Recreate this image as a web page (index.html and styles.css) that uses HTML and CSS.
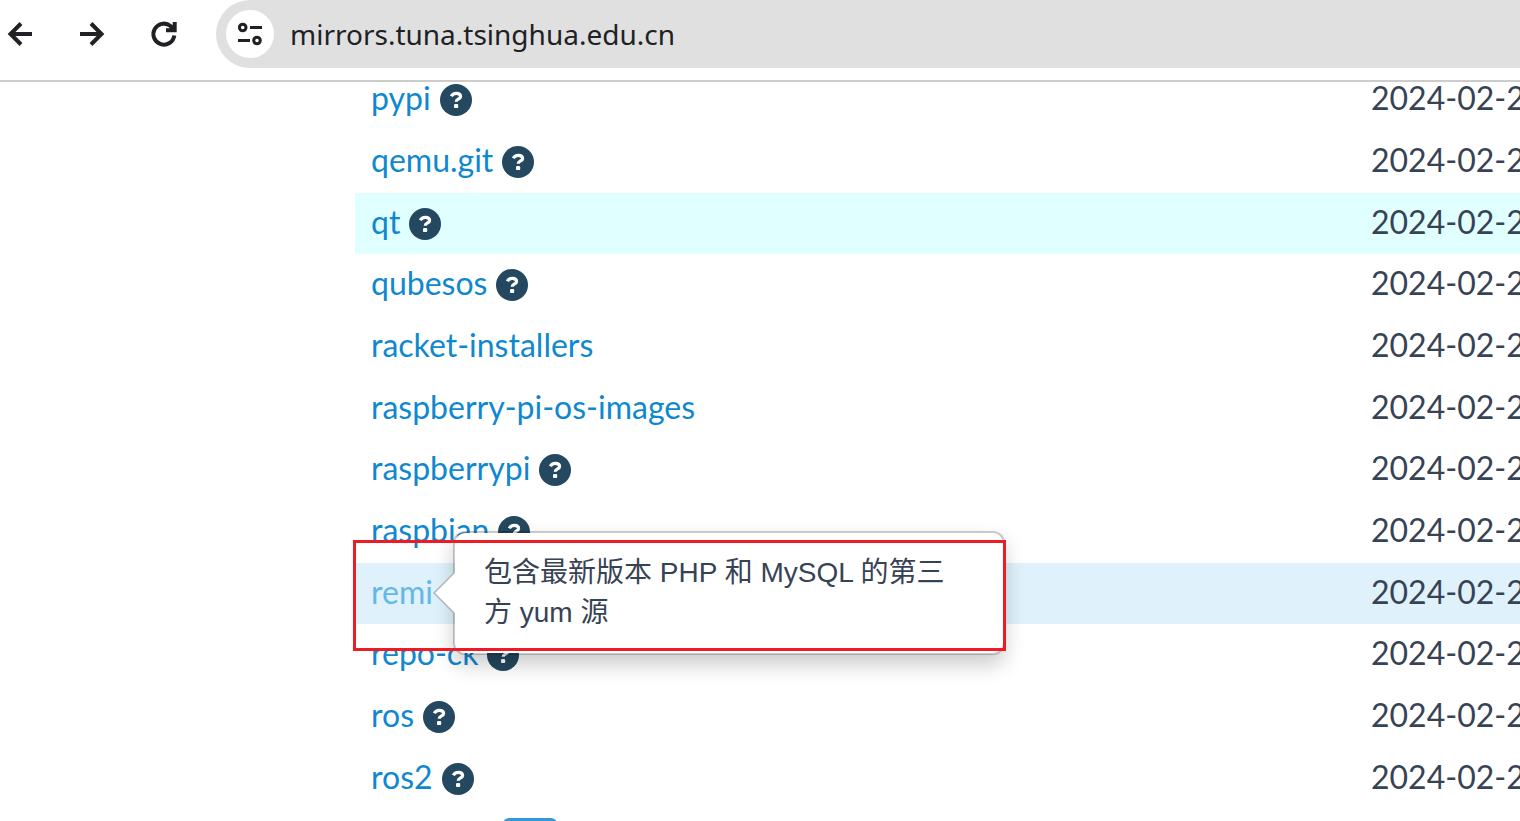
FILE: index.html
```
<!DOCTYPE html>
<html lang="zh-CN">
<head>
<meta charset="utf-8">
<title>mirrors.tuna.tsinghua.edu.cn</title>
<link rel="stylesheet" href="styles.css">
</head>
<body>
<svg class="sprite" aria-hidden="true">
  <symbol id="help" viewBox="0 0 32 32">
    <circle cx="16" cy="16" r="16" fill="currentColor"/>
    <path d="M11.300 12.300C12.400 10.100 14.200 9.300 16.300 9.300C18.900 9.300 20.600 10.600 20.600 12.400C20.600 15 16.200 14.800 16.200 17.800" fill="none" stroke="#fff" stroke-width="3.200"/>
    <rect x="14" y="19.900" width="4.200" height="4.200" rx="1.200" fill="#fff"/>
  </symbol>
</svg>
<header class="toolbar">
  <nav class="nav">
    <button class="nav-btn" type="button" aria-label="Back"><svg viewBox="0 0 28 28"><path d="M26 14H4.500M15 3.500L4.500 14L15 24.500"/></svg></button>
    <button class="nav-btn" type="button" aria-label="Forward"><svg viewBox="0 0 28 28"><path d="M2 14H23.500M13 3.500L23.500 14L13 24.500"/></svg></button>
    <button class="nav-btn" type="button" aria-label="Reload"><svg viewBox="0 0 28 28"><path d="M24.300 15.500A10.500 10.500 0 1 1 20.500 6L24 9.500M24.700 2V10.200H16"/><path class="solid" d="M18 10.500L25 4V10.500Z"/></svg></button>
  </nav>
  <div class="address">
    <button class="site-info" type="button" aria-label="Site information"><svg viewBox="0 0 28 28"><circle cx="6.700" cy="7.500" r="3.300"/><path d="M14 7.500H26M2 20.500H14"/><circle cx="21" cy="20.500" r="3.300"/></svg></button>
    <span class="url">mirrors.tuna.tsinghua.edu.cn</span>
  </div>
</header>
<main class="page">
  <table class="mirrors">
    <colgroup><col><col class="date-col"></colgroup>
    <tbody>
      <tr><td><div class="name"><a href="#">pypi</a><a class="help" href="#" aria-label="Help"><svg><use href="#help"/></svg></a></div></td><td>2024-02-2</td></tr>
      <tr><td><div class="name"><a href="#">qemu.git</a><a class="help" href="#" aria-label="Help"><svg><use href="#help"/></svg></a></div></td><td>2024-02-2</td></tr>
      <tr class="fresh"><td><div class="name"><a href="#">qt</a><a class="help" href="#" aria-label="Help"><svg><use href="#help"/></svg></a></div></td><td>2024-02-2</td></tr>
      <tr><td><div class="name"><a href="#">qubesos</a><a class="help" href="#" aria-label="Help"><svg><use href="#help"/></svg></a></div></td><td>2024-02-2</td></tr>
      <tr><td><div class="name"><a href="#">racket-installers</a></div></td><td>2024-02-2</td></tr>
      <tr><td><div class="name"><a href="#">raspberry-pi-os-images</a></div></td><td>2024-02-2</td></tr>
      <tr><td><div class="name"><a href="#">raspberrypi</a><a class="help" href="#" aria-label="Help"><svg><use href="#help"/></svg></a></div></td><td>2024-02-2</td></tr>
      <tr><td><div class="name"><a href="#">raspbian</a><a class="help" href="#" aria-label="Help"><svg><use href="#help"/></svg></a></div></td><td>2024-02-2</td></tr>
      <tr class="hovered"><td><div class="name"><a href="#">remi</a>
        <div class="popover" role="tooltip">包含最新版本 PHP 和 MySQL 的第三方 yum 源</div></div>
        <div class="marker"></div></td><td>2024-02-2</td></tr>
      <tr><td><div class="name"><a href="#">repo-ck</a><a class="help" href="#" aria-label="Help"><svg><use href="#help"/></svg></a></div></td><td>2024-02-2</td></tr>
      <tr><td><div class="name"><a href="#">ros</a><a class="help" href="#" aria-label="Help"><svg><use href="#help"/></svg></a></div></td><td>2024-02-2</td></tr>
      <tr><td><div class="name"><a href="#">ros2</a><a class="help" href="#" aria-label="Help"><svg><use href="#help"/></svg></a></div></td><td>2024-02-2</td></tr>
      <tr><td><div class="name"><span class="badge"></span></div></td><td></td></tr>
    </tbody>
  </table>
</main>
</body>
</html>
```
FILE: styles.css
```
* { box-sizing: border-box; }

body {
  margin: 0;
  height: 100vh;
  display: flex;
  flex-direction: column;
  overflow: hidden;
  background: #fff;
  color: #374355;
  font-family: Lato, "Noto Sans CJK SC", sans-serif;
  font-size: 32px;
}

a { color: #0f88d0; text-decoration: none; }

button { border: 0; padding: 0; background: none; color: #202124; }

.sprite { position: absolute; width: 0; height: 0; }

.toolbar {
  flex: none;
  display: flex;
  align-items: flex-start;
  gap: 38px;
  padding-left: 6px;
  padding-bottom: 12px;
  border-bottom: 2px solid #ccc;
}

.nav { display: flex; align-items: center; gap: 44px; height: 68px; }

.nav-btn { width: 28px; height: 28px; }

.nav-btn svg,
.site-info svg {
  display: block;
  width: 28px;
  height: 28px;
  fill: none;
  stroke: currentColor;
  stroke-width: 4;
}

.site-info svg { stroke-width: 3; }

.nav-btn .solid { fill: currentColor; stroke: none; }

.address {
  flex: 1;
  display: flex;
  align-items: center;
  gap: 16px;
  height: 68px;
  padding-left: 10px;
  border-radius: 34px 0 0 34px;
  background: #e0e0e0;
}

.site-info {
  display: grid;
  place-items: center;
  width: 48px;
  height: 48px;
  border-radius: 50%;
  background: #fff;
}

.url {
  color: #202124;
  font-family: "Noto Sans", "Open Sans", sans-serif;
  font-size: 28px;
  line-height: 40px;
}

.page { flex: 1; min-height: 0; overflow: hidden; padding-left: 355px; }

/* The list is scrolled so that its first row sits partly under the toolbar. */
.mirrors {
  width: 100%;
  margin-top: -13px;
  table-layout: fixed;
  border-collapse: collapse;
}

.date-col { width: 165px; }

.mirrors tr { height: 62px; }
.mirrors tr:nth-child(3n) { height: 61px; }

.mirrors td {
  padding: 0 0 4px 16px;
  line-height: 40px;
  white-space: nowrap;
}

.mirrors td:first-child { position: relative; }

.name { display: flex; align-items: center; gap: 9px; }

.help { padding-top: 4px; color: #24485f; }
.help svg { display: block; width: 32px; height: 32px; }

.fresh { background: #e0ffff; }
.hovered { background: #dff1fb; }
.hovered a { color: #65b8e6; }

.badge {
  width: 54px;
  height: 40px;
  margin-left: 132px;
  border-radius: 6px;
  background: #3498db;
}

.popover {
  position: absolute;
  z-index: 1;
  top: -32px;
  left: 98px;
  width: 552px;
  padding: 20px 48px 20px 29px;
  border: 2px solid rgba(0, 0, 0, 0.2);
  border-radius: 12px;
  background: #fff;
  background-clip: padding-box;
  box-shadow: 0 10px 20px rgba(0, 0, 0, 0.2);
  font-family: "Liberation Sans", "Noto Sans CJK SC", sans-serif;
  font-size: 28px;
  line-height: 40px;
  white-space: normal;
}

.popover::before,
.popover::after {
  content: "";
  position: absolute;
  top: 39px;
  width: 21px;
  height: 42px;
  clip-path: polygon(100% 0, 0 50%, 100% 100%);
}

.popover::before { left: -22px; background: #a9b4b9; }
.popover::after { left: -20px; background: #fff; }

.marker {
  position: absolute;
  z-index: 2;
  top: -23px;
  left: -2px;
  width: 653px;
  height: 111px;
  border: 3px solid #ed1c24;
}
```
